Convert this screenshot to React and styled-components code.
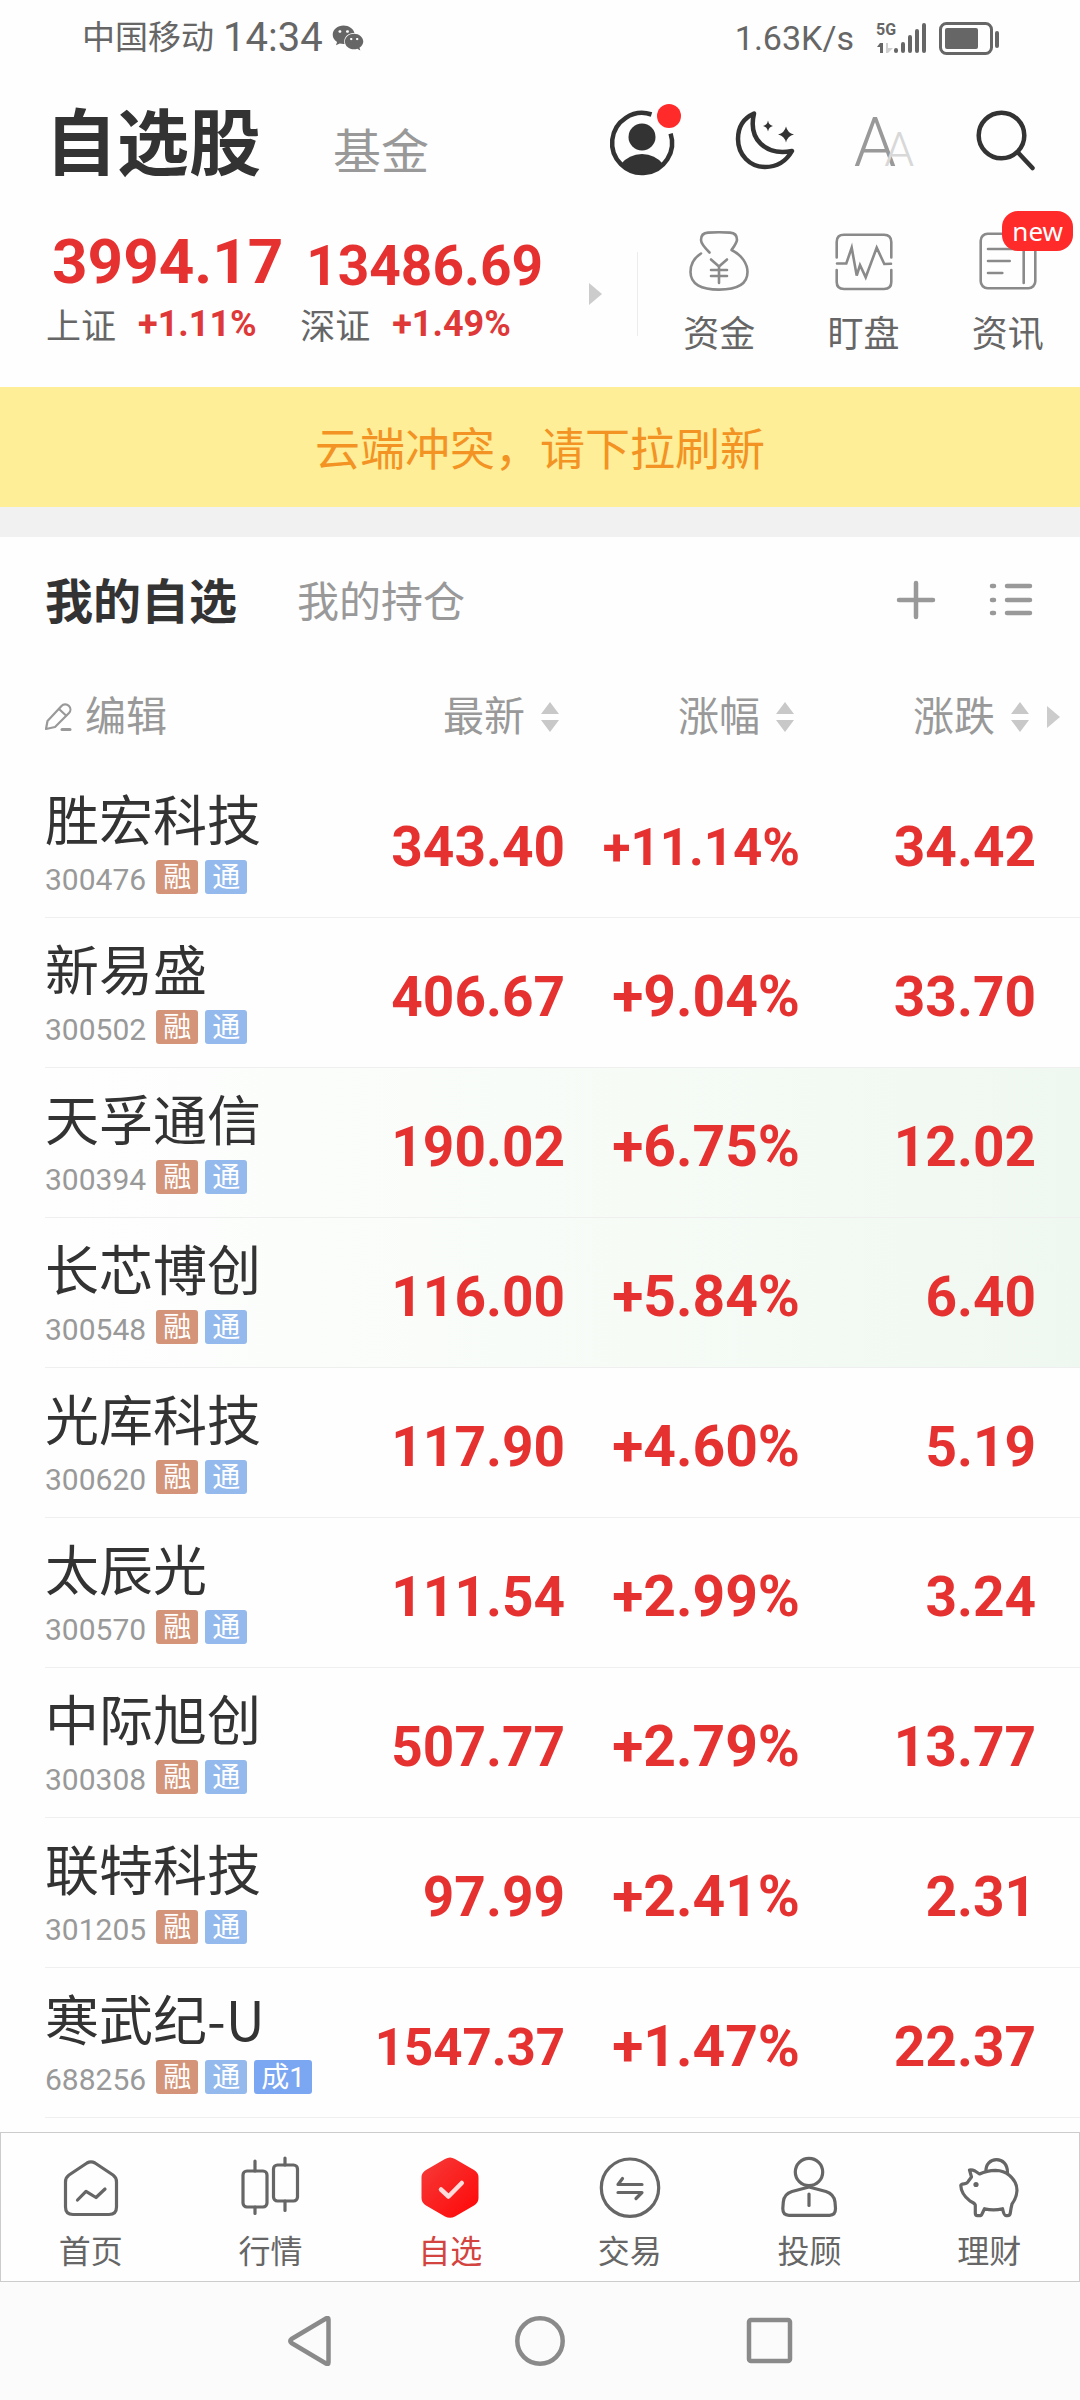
import React from "react";
import styled, { createGlobalStyle } from "styled-components";
import { FaWeixin } from "react-icons/fa";

const GlobalStyle = createGlobalStyle`
  * {
    box-sizing: border-box;
  }

  body {
    margin: 0;
    background: #fefefe;
    color: #333333;
    font-family: Roboto, "Noto Sans CJK SC", sans-serif;
  }

  button {
    padding: 0;
    border: none;
    background: none;
    color: inherit;
    font: inherit;
    cursor: pointer;
  }

  a {
    color: inherit;
    text-decoration: none;
  }

  svg {
    display: block;
  }
`;

const Page = styled.div`
  display: flex;
  flex-direction: column;
  min-height: 100vh;
`;

const StatusBar = styled.div`
  display: flex;
  justify-content: space-between;
  padding: 14px 80px 14px 82px;
  line-height: 48px;
  color: #666666;
`;

const StatusGroup = styled.div`
  display: flex;
  align-items: center;
  gap: 9px;
`;

const Carrier = styled.span`
  font-size: 33px;
`;

const Clock = styled.span`
  font-size: 40px;
`;

const Speed = styled.span`
  margin-right: 12px;
  font-size: 34px;
`;

const Header = styled.header`
  display: flex;
  justify-content: space-between;
  align-items: center;
  padding: 27px 35px 27px 45px;
`;

const HeaderTabs = styled.div`
  display: flex;
  align-items: baseline;
  gap: 72px;
  padding-top: 4px;
`;

const PageTitle = styled.h1`
  margin: 0;
  font-size: 72px;
  line-height: 76px;
  font-weight: 700;
`;

const FundLink = styled.a`
  font-size: 48px;
  line-height: 56px;
  color: #999999;
`;

const HeaderActions = styled.div`
  display: flex;
  gap: 41px;
`;

const IconButton = styled.button`
  width: 80px;
  height: 80px;
`;

const FontSizeButton = styled(IconButton)`
  display: flex;
  align-items: baseline;
  justify-content: center;
  font-weight: 300;
  line-height: 80px;
`;

const LetterBig = styled.span`
  font-size: 68px;
  color: #999999;
`;

const LetterSmall = styled.span`
  margin-left: -12px;
  font-size: 48px;
  color: #d8d8d8;
`;

const Overview = styled.section`
  display: grid;
  grid-template-columns: 59% 41%;
  padding: 16px 0 28px;
`;

const Indices = styled.div`
  display: flex;
  padding-left: 46px;
`;

const Index = styled.a`
  flex: 0 0 43%;
`;

const IndexValue = styled.div`
  padding-top: ${(props) => (props.$compact ? "8px" : "0")};
  padding-left: 6px;
  font-size: ${(props) => (props.$compact ? "55px" : "62px")};
  font-weight: 700;
  line-height: ${(props) => (props.$compact ? "64px" : "72px")};
  color: #e63131;
`;

const IndexMeta = styled.div`
  display: flex;
  align-items: flex-start;
  gap: 22px;
  margin-top: 6px;
  font-size: 35px;
  line-height: 48px;
  color: #666666;
`;

const IndexChange = styled.span`
  font-size: 36px;
  font-weight: 700;
  line-height: 40px;
  color: #df3838;
`;

const NextButton = styled.button`
  margin: 2px 0 0 35px;
`;

const Shortcuts = styled.div`
  display: grid;
  grid-template-columns: repeat(3, 1fr);
  padding-left: 10px;
  background: linear-gradient(#ececec, #ececec) 0 26px / 1px 84px no-repeat;
`;

const Shortcut = styled.a`
  position: relative;
  display: flex;
  flex-direction: column;
  align-items: center;
  gap: 20px;
  padding-top: 5px;
  font-size: 36px;
  line-height: 48px;
  color: #666666;
`;

const Badge = styled.span`
  position: absolute;
  top: -15px;
  right: 7px;
  padding: 0 10px;
  border-radius: 16px;
  background: #ff2b2b;
  color: #ffffff;
  font-family: "Noto Sans", sans-serif;
  font-size: 26px;
  line-height: 40px;
`;

const Notice = styled.div`
  padding: 34px 30px 26px;
  border-bottom: 30px solid #f1f1f1;
  background: #feee97;
  color: #f39324;
  font-size: 45px;
  line-height: 60px;
  text-align: center;
`;

const ListTabs = styled.div`
  display: flex;
  align-items: center;
  padding: 36px 47px 31px 45px;
  line-height: 60px;
`;

const ListTab = styled.button`
  margin-right: 60px;
  font-size: ${(props) => (props.$active ? "48px" : "42px")};
  font-weight: ${(props) => (props.$active ? 700 : 400)};
  color: ${(props) => (props.$active ? "#333333" : "#999999")};
`;

const ListTools = styled.div`
  display: flex;
  gap: 52px;
  margin-left: auto;
  padding-bottom: 6px;
`;

const StockTable = styled.table`
  width: calc(100% - 45px);
  margin-left: 45px;
  border-collapse: separate;
  border-spacing: 0;
  table-layout: fixed;
`;

const HeadCell = styled.th`
  width: ${(props) => props.$width};
  height: 104px;
  padding: 2px ${(props) => (props.$last ? "20px" : "6px")} 0 0;
  font-size: 41px;
  font-weight: 400;
  color: #999999;
`;

const HeadButton = styled.button`
  display: flex;
  align-items: center;
  gap: ${(props) => props.$gap || "16px"};
  line-height: 60px;
  white-space: nowrap;
`;

const HeadTools = styled.div`
  display: flex;
  align-items: center;
  justify-content: flex-end;
  gap: 18px;
`;

const StockRow = styled.tr`
  background: ${(props) =>
    props.$highlight
      ? "linear-gradient(to right, #fefefe, #f8fcf8 45%, #eff8f0)"
      : "none"};
`;

const NameCell = styled.td`
  height: 150px;
  padding: 0;
  border-bottom: 1px solid #efefef;
`;

const StockName = styled.div`
  margin-bottom: 10px;
  font-family: "Noto Sans CJK SC", sans-serif;
  font-size: 54px;
  line-height: 58px;
  white-space: nowrap;
`;

const StockMeta = styled.div`
  display: flex;
  align-items: center;
  gap: 7px;
  line-height: 40px;
`;

const StockCode = styled.span`
  margin-right: 3px;
  padding-top: 6px;
  font-size: 30px;
  line-height: 34px;
  color: #999999;
`;

const tagColors = {
  融: "#d39479",
  通: "#94b9ec",
  成1: "#7aa6f2",
};

const Tag = styled.span`
  padding: 2px 7px 0;
  border-radius: 3px;
  background: ${(props) => props.$color};
  color: #ffffff;
  font-size: 28px;
  line-height: 32px;
`;

const NumberCell = styled.td`
  padding: 8px ${(props) => (props.$last ? "44px" : "0")} 0 0;
  border-bottom: 1px solid #efefef;
  color: #e63131;
  font-size: ${(props) => (props.$percent ? "57px" : "55px")};
  font-weight: 700;
  line-height: 72px;
  text-align: right;
  white-space: nowrap;
`;

const LongNumber = styled.span`
  font-size: 51px;
`;

const TabBar = styled.nav`
  display: grid;
  grid-template-columns: repeat(6, 1fr);
  margin-top: auto;
  border: 1px solid #cccccc;
  background: #fefefe;
`;

const TabLink = styled.a`
  display: flex;
  flex-direction: column;
  align-items: center;
  gap: 10px;
  padding: 25px 0 5px;
  font-size: 32px;
  line-height: 48px;
  color: ${(props) => (props.$active ? "#d34440" : "#666666")};
`;

const SystemNav = styled.div`
  display: flex;
  justify-content: center;
  gap: 180px;
  padding: 34px 0;
  background: #fbfbfb;
`;

const stocks = [
  { name: "胜宏科技", code: "300476", price: "343.40", percent: "+11.14%", change: "34.42" },
  { name: "新易盛", code: "300502", price: "406.67", percent: "+9.04%", change: "33.70" },
  { name: "天孚通信", code: "300394", price: "190.02", percent: "+6.75%", change: "12.02", highlight: true },
  { name: "长芯博创", code: "300548", price: "116.00", percent: "+5.84%", change: "6.40", highlight: true },
  { name: "光库科技", code: "300620", price: "117.90", percent: "+4.60%", change: "5.19" },
  { name: "太辰光", code: "300570", price: "111.54", percent: "+2.99%", change: "3.24" },
  { name: "中际旭创", code: "300308", price: "507.77", percent: "+2.79%", change: "13.77" },
  { name: "联特科技", code: "301205", price: "97.99", percent: "+2.41%", change: "2.31" },
  { name: "寒武纪-U", code: "688256", price: "1547.37", percent: "+1.47%", change: "22.37", tags: ["融", "通", "成1"] },
];

const SignalIcon = () => (
  <svg width="55" height="36" viewBox="0 0 55 36" fill="#666666">
    <text x="1" y="15" fontSize="16" fontWeight="700" fontFamily="Roboto, sans-serif">
      5G
    </text>
    <path d="M5 23h3v10H5v-6H2z" />
    <path d="M11 23h2v5h5l-5 5h-2z" fill="#cfcfcf" />
    <g stroke="#666666" strokeWidth="4" strokeLinecap="round">
      <path d="M21 30v1M28 24v7M35 17v14M42 11v20M49 5v26" />
    </g>
  </svg>
);

const BatteryIcon = () => (
  <svg width="61" height="36" viewBox="0 0 61 36" fill="none">
    <rect x="1.5" y="3.5" width="51" height="30" rx="6" stroke="#666666" strokeWidth="3" />
    <rect x="6" y="8" width="33" height="21" rx="2" fill="#666666" />
    <rect x="56" y="11" width="4" height="17" rx="2" fill="#666666" />
  </svg>
);

const ProfileIcon = () => (
  <svg width="80" height="80" viewBox="0 0 80 80" fill="none">
    <path d="M49.5 11.5A30 30 0 1 0 68.6 30.6" stroke="#333333" strokeWidth="4.5" />
    <circle cx="40" cy="34" r="13.5" fill="#333333" />
    <path d="M18.5 61.5Q27 51 40 51T61.5 61.5A31 31 0 0 1 18.5 61.5Z" fill="#333333" />
    <circle cx="67" cy="13" r="12" fill="#ff2b2b" />
  </svg>
);

const MoonIcon = () => (
  <svg width="80" height="80" viewBox="0 0 80 80" fill="none">
    <path
      d="M31 10.5C25 36 42 53 69 48C63 58.5 54 64 42 64C27 64 15 52 15 36C15 24 21 15 31 10.5Z"
      stroke="#333333"
      strokeWidth="4.5"
      strokeLinejoin="round"
    />
    <path d="M45 17.5Q45.8 22.2 50 23Q45.8 23.8 45 28.5Q44.2 23.8 40 23Q44.2 22.2 45 17.5Z" fill="#333333" />
    <path d="M63 23.5Q64.5 30 71 31.5Q64.5 33 63 39.5Q61.5 33 55 31.5Q61.5 30 63 23.5Z" fill="#333333" />
  </svg>
);

const SearchIcon = () => (
  <svg width="80" height="80" viewBox="0 0 80 80" fill="none" stroke="#333333" strokeWidth="4.5" strokeLinecap="round">
    <circle cx="36.5" cy="32.5" r="22.8" />
    <path d="M53 49.5L67.5 65" />
  </svg>
);

const MoneyBagIcon = () => (
  <svg width="60" height="60" viewBox="0 0 60 60" fill="none" stroke="#8a8a8a" strokeWidth="2.6" strokeLinecap="round" strokeLinejoin="round">
    <path d="M20.5 21.5C16 17 12 13 12 9C12 4.5 14.5 1.8 19 1.6Q30 1 41 1.6C45.5 1.8 48 4.5 48 9C47.5 12.5 45 15.5 42.5 19C53 24 58.5 33 58.5 41C58.5 53 48 58.6 30 58.6C12 58.6 1.5 53 1.5 41C1.5 34 5 27 12 22.5" />
    <path d="M22 28.5L30 35.5L38 28.5M30 35.5V52M22 39H38M22 45H38" />
  </svg>
);

const PulseIcon = () => (
  <svg width="60" height="60" viewBox="0 0 60 60" fill="none" stroke="#8a8a8a" strokeWidth="2.6" strokeLinecap="round">
    <path d="M2.7 26.5V11Q2.7 3.7 10 3.7H50Q57.3 3.7 57.3 11V26.5" />
    <path d="M2.7 39V51Q2.7 58 10 58H50Q57.3 58 57.3 51V39" />
    <path d="M3 32.5H12.3L17.7 16.7L22.7 44.5L26 34L31.7 46.3L42.7 16.7L50.3 33L57 32.7" />
  </svg>
);

const NewsIcon = () => (
  <svg width="60" height="60" viewBox="0 0 60 60" fill="none" stroke="#8a8a8a" strokeWidth="2.6" strokeLinecap="round">
    <rect x="2.7" y="2.7" width="54.6" height="54.6" rx="7" />
    <path d="M10 18H45.7V52M10 30H31.7M10 42H24.3" />
  </svg>
);

const PlusIcon = () => (
  <svg width="42" height="42" viewBox="0 0 42 42" stroke="#999999" strokeWidth="4.5" strokeLinecap="round">
    <path d="M21 4V38M4 21H38" />
  </svg>
);

const ListIcon = () => (
  <svg width="44" height="42" viewBox="0 0 44 42" stroke="#999999" strokeWidth="4.5" strokeLinecap="round">
    <path d="M3 7H5M18 7H41M3 21H5M18 21H41M3 34H5M18 34H41" />
  </svg>
);

const EditIcon = () => (
  <svg width="30" height="30" viewBox="1 0 30 30" fill="none" stroke="#999999" strokeWidth="2.2" strokeLinecap="round" strokeLinejoin="round">
    <path d="M2 27L3.5 19L17.5 4A5 5 0 0 1 25 11L11 25Z" />
    <path d="M15 7L22 13.5" />
    <path d="M18 27.5H26" strokeWidth="3" />
  </svg>
);

const SortIcon = () => (
  <svg width="18" height="32" viewBox="0 0 18 32" fill="#c8c8c8">
    <path d="M9 1L18 13H0ZM9 31L18 19H0Z" />
  </svg>
);

const RightArrow = () => (
  <svg width="13" height="22" viewBox="0 0 13 22" fill="#cccccc">
    <path d="M0 0L13 11L0 22Z" />
  </svg>
);

const TabIcon = ({ children }) => (
  <svg width="60" height="60" viewBox="0 0 60 60" overflow="visible" fill="none" stroke="#666666" strokeWidth="3.2" strokeLinecap="round" strokeLinejoin="round">
    {children}
  </svg>
);

const tabs = [
  {
    label: "首页",
    icon: (
      <TabIcon>
        <path d="M4.5 24Q4.5 19.5 8 17L26 5Q30 2.8 34 5L52 17Q55.5 19.5 55.5 24V49Q55.5 56.5 48 56.5H12Q4.5 56.5 4.5 49Z" />
        <path d="M16.5 42L25 33.3L35 39.5L44 31" />
      </TabIcon>
    ),
  },
  {
    label: "行情",
    icon: (
      <TabIcon>
        <rect x="3" y="13" width="24" height="36" rx="4" />
        <rect x="33.5" y="7" width="24" height="36" rx="4" />
        <path d="M15 3V13M15 49V55.5M45 0V7M45 43V52.5" />
      </TabIcon>
    ),
  },
  {
    label: "自选",
    active: true,
    icon: (
      <TabIcon>
        <defs>
          <linearGradient id="hexagon" x1="0" y1="0" x2="1" y2="1">
            <stop offset="0" stopColor="#f53c3a" />
            <stop offset="1" stopColor="#ff0606" />
          </linearGradient>
        </defs>
        <path
          d="M25 1Q30 -2 35 1L54 12Q58.5 15 58.5 19V40Q58.5 45 54 47.5L35 58.5Q30 61 25 58.5L6 47.5Q1.5 45 1.5 40V19Q1.5 15 6 12Z"
          fill="url(#hexagon)"
          stroke="none"
        />
        <path d="M21 31.5L28.5 38.5L41.8 25" stroke="#ffdcdc" strokeWidth="4.5" />
      </TabIcon>
    ),
  },
  {
    label: "交易",
    icon: (
      <TabIcon>
        <circle cx="30" cy="29.7" r="28.7" />
        <path d="M42 26.5H18L22.5 20.5M18 34.5H42L36 40.5" />
      </TabIcon>
    ),
  },
  {
    label: "投顾",
    icon: (
      <TabIcon>
        <circle cx="30" cy="14" r="13.7" />
        <path d="M30 29L13 33.5Q5 36 4.3 44L3.8 50.5Q3.8 57.3 10 57.3H50.5Q56.5 57.3 56.5 50.5L56 44Q55 36 47 33.5Z" />
        <path d="M30 36V47.5" />
      </TabIcon>
    ),
  },
  {
    label: "理财",
    icon: (
      <TabIcon>
        <path d="M27 13.5C26.5 6 31.5 1.7 37.5 1.7S48.5 6 48.5 14.5" />
        <path d="M20.5 16Q28 12.3 36.5 12.3Q45 12.5 50 17Q58 23.5 58 32.5Q57.5 40 53 46Q52 50 51.3 55Q51 57.7 48.5 57.7H47Q45 57.7 43.5 50.7Q34.5 53 25.5 50.7L23 56Q22.5 57.7 20 57.7H18.5Q16.3 57.7 16.3 55V47Q15.5 45 11 43Q2 36 1.8 27.5Q2 26 5 25.8Q8.5 25.5 9.5 23L12.5 19L10.5 12Q13 11.5 16 13Z" />
        <circle cx="17" cy="26.5" r="2.6" fill="#666666" stroke="none" />
      </TabIcon>
    ),
  },
];

const StockNumber = ({ value, percent, last }) => (
  <NumberCell $percent={percent} $last={last}>
    {value.length > 6 ? <LongNumber>{value}</LongNumber> : value}
  </NumberCell>
);

const App = () => {
  return (
    <>
      <GlobalStyle />
      <Page>
        <StatusBar>
          <StatusGroup>
            <Carrier>中国移动</Carrier>
            <Clock>14:34</Clock>
            <FaWeixin size={32} />
          </StatusGroup>
          <StatusGroup>
            <Speed>1.63K/s</Speed>
            <SignalIcon />
            <BatteryIcon />
          </StatusGroup>
        </StatusBar>

        <Header>
          <HeaderTabs>
            <PageTitle>自选股</PageTitle>
            <FundLink href="#fund">基金</FundLink>
          </HeaderTabs>
          <HeaderActions>
            <IconButton aria-label="我的">
              <ProfileIcon />
            </IconButton>
            <IconButton aria-label="夜间模式">
              <MoonIcon />
            </IconButton>
            <FontSizeButton aria-label="字体大小">
              <LetterBig>A</LetterBig>
              <LetterSmall>A</LetterSmall>
            </FontSizeButton>
            <IconButton aria-label="搜索">
              <SearchIcon />
            </IconButton>
          </HeaderActions>
        </Header>

        <Overview>
          <Indices>
            <Index href="#sh">
              <IndexValue>3994.17</IndexValue>
              <IndexMeta>
                上证 <IndexChange>+1.11%</IndexChange>
              </IndexMeta>
            </Index>
            <Index href="#sz">
              <IndexValue $compact>13486.69</IndexValue>
              <IndexMeta>
                深证 <IndexChange>+1.49%</IndexChange>
              </IndexMeta>
            </Index>
            <NextButton aria-label="更多指数">
              <RightArrow />
            </NextButton>
          </Indices>
          <Shortcuts>
            <Shortcut href="#money">
              <MoneyBagIcon />
              资金
            </Shortcut>
            <Shortcut href="#watch">
              <PulseIcon />
              盯盘
            </Shortcut>
            <Shortcut href="#news">
              <NewsIcon />
              资讯
              <Badge>new</Badge>
            </Shortcut>
          </Shortcuts>
        </Overview>

        <Notice>云端冲突，请下拉刷新</Notice>

        <ListTabs>
          <ListTab $active>我的自选</ListTab>
          <ListTab>我的持仓</ListTab>
          <ListTools>
            <button aria-label="添加">
              <PlusIcon />
            </button>
            <button aria-label="列表">
              <ListIcon />
            </button>
          </ListTools>
        </ListTabs>

        <StockTable>
          <thead>
            <tr>
              <HeadCell>
                <HeadButton $gap="10px">
                  <EditIcon />
                  编辑
                </HeadButton>
              </HeadCell>
              <HeadCell $width="200px">
                <HeadTools>
                  <HeadButton>
                    最新
                    <SortIcon />
                  </HeadButton>
                </HeadTools>
              </HeadCell>
              <HeadCell $width="235px">
                <HeadTools>
                  <HeadButton>
                    涨幅
                    <SortIcon />
                  </HeadButton>
                </HeadTools>
              </HeadCell>
              <HeadCell $width="280px" $last>
                <HeadTools>
                  <HeadButton>
                    涨跌
                    <SortIcon />
                  </HeadButton>
                  <button aria-label="更多列">
                    <RightArrow />
                  </button>
                </HeadTools>
              </HeadCell>
            </tr>
          </thead>
          <tbody>
            {stocks.map((stock) => (
              <StockRow key={stock.code} $highlight={stock.highlight}>
                <NameCell>
                  <StockName>{stock.name}</StockName>
                  <StockMeta>
                    <StockCode>{stock.code}</StockCode>
                    {(stock.tags || ["融", "通"]).map((tag) => (
                      <Tag key={tag} $color={tagColors[tag]}>
                        {tag}
                      </Tag>
                    ))}
                  </StockMeta>
                </NameCell>
                <StockNumber value={stock.price} />
                <StockNumber value={stock.percent} percent />
                <StockNumber value={stock.change} last />
              </StockRow>
            ))}
          </tbody>
        </StockTable>

        <TabBar>
          {tabs.map((tab) => (
            <TabLink key={tab.label} href="#tab" $active={tab.active}>
              {tab.icon}
              {tab.label}
            </TabLink>
          ))}
        </TabBar>
        <SystemNav>
          <button aria-label="返回">
            <svg width="50" height="50" viewBox="0 0 50 50" fill="none" stroke="#8a8a8a" strokeWidth="4.5" strokeLinejoin="round">
              <path d="M43.5 3.5Q43.5 1 41 2.5L6.5 23Q4 25 6.5 27L41 47.5Q43.5 49 43.5 46.5Z" />
            </svg>
          </button>
          <button aria-label="主页">
            <svg width="50" height="50" viewBox="0 0 50 50" fill="none" stroke="#8a8a8a" strokeWidth="4.5">
              <circle cx="25" cy="25" r="22.7" />
            </svg>
          </button>
          <button aria-label="最近任务">
            <svg width="50" height="50" viewBox="0 0 50 50" fill="none" stroke="#8a8a8a" strokeWidth="4.5">
              <rect x="4" y="4" width="41" height="41" rx="2" />
            </svg>
          </button>
        </SystemNav>
      </Page>
    </>
  );
};

export default App;
